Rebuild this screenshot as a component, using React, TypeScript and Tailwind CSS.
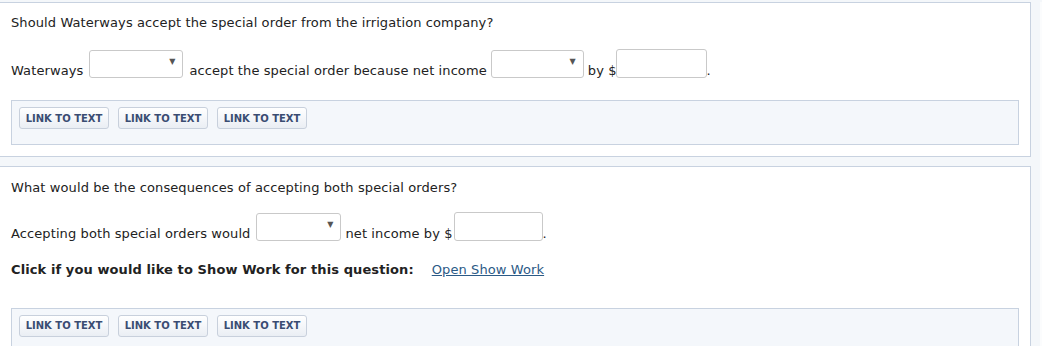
import React from "react";

const font = { fontFamily: '"DejaVu Sans", Verdana, sans-serif' };

function Dropdown({ width }: { width: string }) {
  return (
    <div className={`relative h-[28px] ${width} rounded-[3px] border border-[#c9c9c9] bg-white`}>
      <span className="absolute right-[7px] top-[7px] text-[8px] leading-none text-[#555]">▼</span>
    </div>
  );
}

function Field({ width }: { width: string }) {
  return <div className={`h-[29px] ${width} rounded-[3px] border border-[#c9c9c9] bg-white`} />;
}

function LinkBar({ extra = "" }: { extra?: string }) {
  return (
    <div className={`border border-[#c8d2e0] bg-[#f4f7fb] px-[7px] pt-[6px] ${extra}`}>
      <div className="flex gap-[9px]">
        {[0, 1, 2].map((i) => (
          <button
            key={i}
            className="h-[22px] w-[90px] rounded-[3px] border border-[#c8d0dc] bg-gradient-to-b from-white to-[#eaeef4] text-[10px] font-bold tracking-normal text-[#3a4c72]"
          >
            LINK TO TEXT
          </button>
        ))}
      </div>
    </div>
  );
}

export default function App() {
  return (
    <div className="h-[346px] w-[1042px] overflow-hidden bg-[#f4f7fa] pt-[2px] text-[13px] tracking-[0.1px] text-[#222]" style={font}>
      <div className="flex">
        <div className="w-[1031px]">
          {/* Question 1 */}
          <div className="-ml-px border border-[#c8d2e0] bg-white px-[11px] pb-[11px] pt-[12px]">
            <p className="leading-[16px]">Should Waterways accept the special order from the irrigation company?</p>
            <div className="mt-[18px] flex items-end">
              <span className="mr-[6px] leading-[15px]">Waterways</span>
              <Dropdown width="w-[94px]" />
              <span className="ml-[6px] mr-[4px] leading-[15px]">accept the special order because net income</span>
              <Dropdown width="w-[93px]" />
              <span className="ml-[4px] mr-[-1px] leading-[15px]">by $</span>
              <Field width="w-[91px]" />
              <span className="leading-[15px]">.</span>
            </div>
            <LinkBar extra="mt-[22px] h-[45px]" />
          </div>

          {/* Question 2 */}
          <div className="-ml-px mt-[9px] h-[200px] border border-[#c8d2e0] bg-white px-[11px] pt-[13px]">
            <p className="leading-[16px]">What would be the consequences of accepting both special orders?</p>
            <div className="mt-[16px] flex items-end">
              <span className="mr-[6px] leading-[15px]">Accepting both special orders would</span>
              <Dropdown width="w-[85px]" />
              <span className="ml-[4px] mr-[1px] leading-[15px]">net income by $</span>
              <Field width="w-[89px]" />
              <span className="leading-[15px]">.</span>
            </div>
            <div className="mt-[19px] flex items-center">
              <span className="font-bold">Click if you would like to Show Work for this question:</span>
              <a href="#" className="ml-[18px] text-[#2b5a86] underline">Open Show Work</a>
            </div>
            <LinkBar extra="mt-[28px] h-[60px]" />
          </div>
        </div>
        <div className="ml-[9px] h-[346px] w-[2px] bg-[#fbfcfd]" />
      </div>
    </div>
  );
}
